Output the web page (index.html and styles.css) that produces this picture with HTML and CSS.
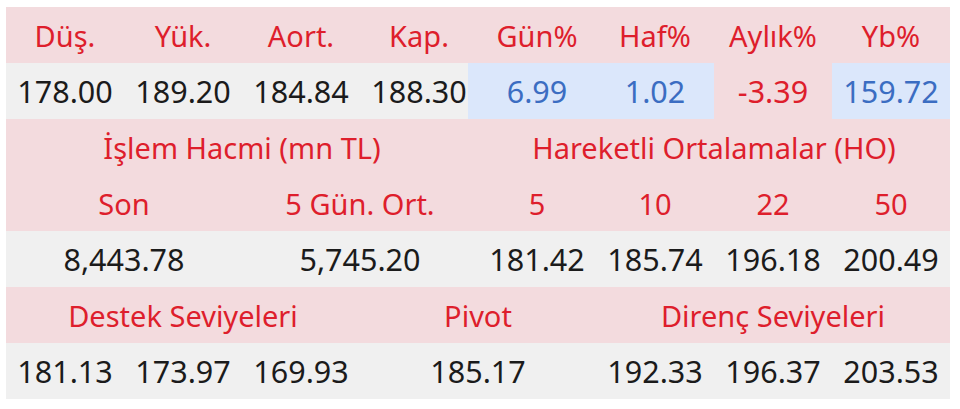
FILE: index.html
```html
<!DOCTYPE html>
<html lang="tr">
<head>
<meta charset="utf-8">
<title>Hisse Özeti</title>
<link rel="stylesheet" href="styles.css">
</head>
<body>
<div class="board">
  <div class="c h">Düş.</div>
  <div class="c h">Yük.</div>
  <div class="c h">Aort.</div>
  <div class="c h">Kap.</div>
  <div class="c h">Gün%</div>
  <div class="c h">Haf%</div>
  <div class="c h">Aylık%</div>
  <div class="c h">Yb%</div>

  <div class="c d">178.00</div>
  <div class="c d">189.20</div>
  <div class="c d">184.84</div>
  <div class="c d">188.30</div>
  <div class="c up first-up">6.99</div>
  <div class="c up">1.02</div>
  <div class="c down">-3.39</div>
  <div class="c up">159.72</div>

  <div class="c h span4">İşlem Hacmi (mn TL)</div>
  <div class="c h span4">Hareketli Ortalamalar (HO)</div>

  <div class="c h span2">Son</div>
  <div class="c h span2">5 Gün. Ort.</div>
  <div class="c h">5</div>
  <div class="c h">10</div>
  <div class="c h">22</div>
  <div class="c h">50</div>

  <div class="c d span2">8,443.78</div>
  <div class="c d span2">5,745.20</div>
  <div class="c d">181.42</div>
  <div class="c d">185.74</div>
  <div class="c d">196.18</div>
  <div class="c d">200.49</div>

  <div class="c h span3">Destek Seviyeleri</div>
  <div class="c h span2">Pivot</div>
  <div class="c h span3">Direnç Seviyeleri</div>

  <div class="c d">181.13</div>
  <div class="c d">173.97</div>
  <div class="c d">169.93</div>
  <div class="c d span2">185.17</div>
  <div class="c d">192.33</div>
  <div class="c d">196.37</div>
  <div class="c d">203.53</div>
</div>
</body>
</html>
```
FILE: styles.css
```css
html, body {
  margin: 0;
  padding: 0;
  background: #ffffff;
}
body {
  padding: 7px 10px 0 6px;
  font-family: "Noto Sans", "DejaVu Sans", sans-serif;
}
.board {
  width: 944px;
  display: grid;
  grid-template-columns: repeat(8, 1fr);
  grid-auto-rows: 56px;
  font-size: 29px;
  line-height: 1;
}
.c {
  display: flex;
  align-items: center;
  justify-content: center;
  white-space: nowrap;
}
.h {
  background: #f3dbde;
  color: #de1e2c;
}
.d,
.up,
.down {
  font-size: 30.5px;
}
.d {
  background: #f0f0f0;
  color: #1b1b1b;
}
.up {
  background: #dbe7fb;
  color: #3b6dc2;
}
.first-up {
  margin-left: -10px;
  padding-left: 10px;
}
.down {
  background: #f3dbde;
  color: #de1e2c;
}
.span2 { grid-column: span 2; }
.span3 { grid-column: span 3; }
.span4 { grid-column: span 4; }
```
